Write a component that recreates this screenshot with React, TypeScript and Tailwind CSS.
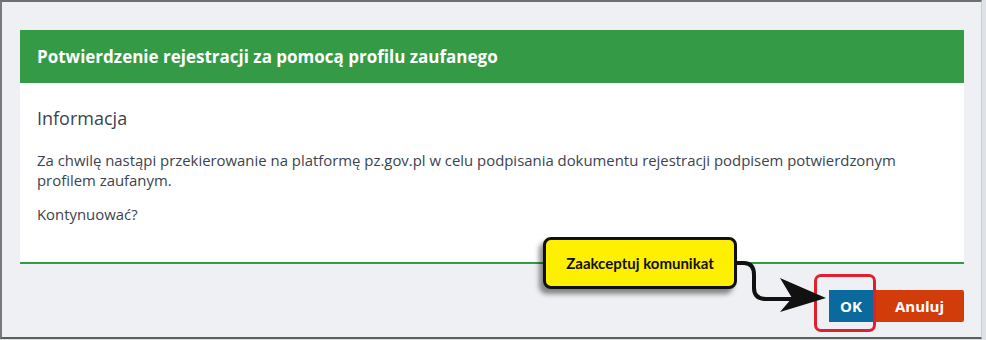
const App = () => {
  return (
    <div className="w-[986px] h-[340px] bg-[#dfe2e6] relative overflow-hidden" style={{ fontFamily: '"Open Sans", "Noto Sans", sans-serif' }}>
      <div className="w-[982px] h-[339px] bg-[#eff0f3] border-t-2 border-l-2 border-b-2 border-r border-t-[#6f6f6f] border-l-[#7a7a7a] border-b-[#5f5f5f] border-r-[#c9ccd1] pt-[28px] pl-[18px] pr-[17px] flex flex-col">
        <div className="h-[53px] bg-[#349a46] flex items-center px-[17px]">
          <span className="text-white text-[17px] font-bold">Potwierdzenie rejestracji za pomocą profilu zaufanego</span>
        </div>
        <div className="bg-white border-b-2 border-[#349a46] h-[181px] pl-[17px] pr-[50px] pt-[22px] text-[#3b4350]">
          <div className="text-[18px] leading-[26px] font-medium">Informacja</div>
          <p className="text-[14.9px] leading-[20px] mt-[19px]">
            Za chwilę nastąpi przekierowanie na platformę pz.gov.pl w celu podpisania dokumentu rejestracji podpisem potwierdzonym profilem zaufanym.
          </p>
          <p className="text-[14.9px] leading-[20px] mt-[14px]">Kontynuować?</p>
        </div>
        <div className="flex justify-end mt-[26px] gap-[2px]">
          <button className="h-[32px] w-[44px] bg-[#0a6a9e] text-white font-bold text-[15px]">OK</button>
          <button className="h-[32px] w-[89px] bg-[#d23c0a] text-white font-bold text-[15px] rounded-r-[2px]">Anuluj</button>
        </div>
      </div>

      <div className="absolute left-[814px] top-[274px] w-[62px] h-[58px] border-[3px] border-[#e0202f] rounded-[7px]" />

      <svg className="absolute left-0 top-0" width="986" height="340" viewBox="0 0 986 340">
        <path d="M736 263 H744 Q754 263 754 275 V288 Q754 299 766 299 H800" fill="none" stroke="#111" strokeWidth="4" />
        <path d="M780 278 L826 298 L780 312 L792 298 Z" fill="#111" />
      </svg>

      <div className="absolute left-[543px] top-[237px] w-[194px] h-[52px] bg-[#ffef00] border-[3px] border-[#111] rounded-[8px] flex items-center justify-center shadow-[-4px_5px_5px_rgba(0,0,0,0.45)]">
        <span className="text-[15px] font-bold text-[#111]" style={{ fontFamily: 'Lato, "Liberation Sans", sans-serif' }}>Zaakceptuj komunikat</span>
      </div>
    </div>
  );
};

export default App;
